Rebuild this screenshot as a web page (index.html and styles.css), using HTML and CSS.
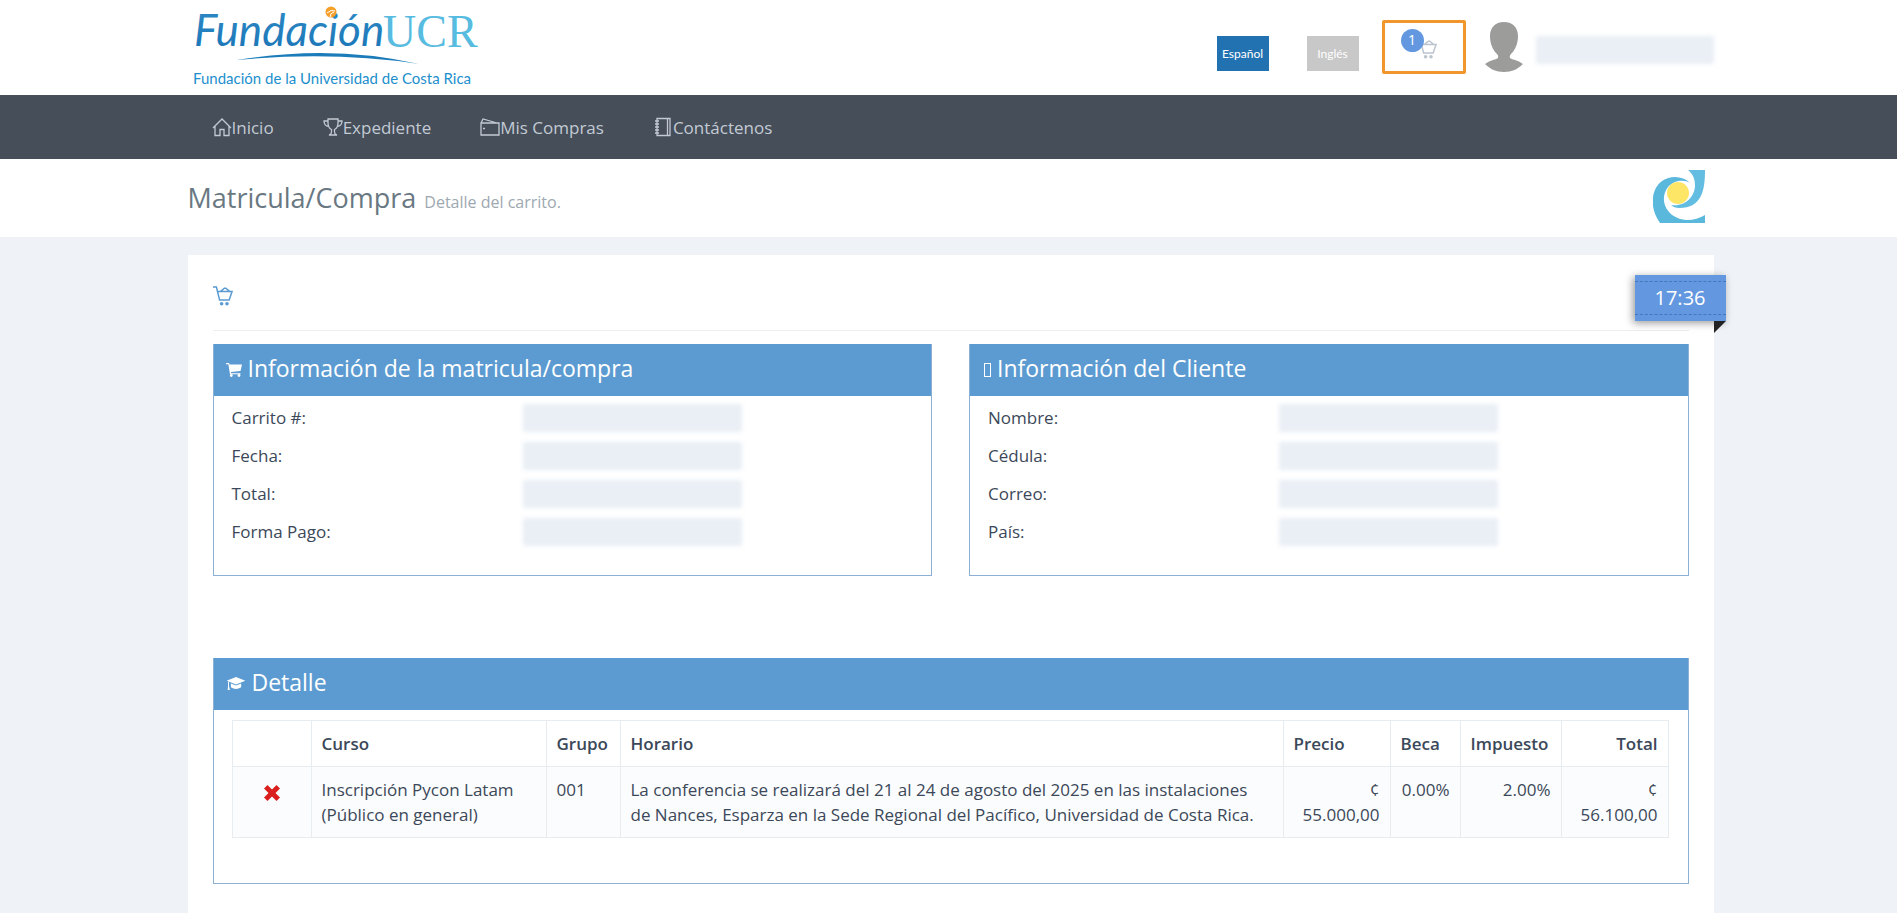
FILE: index.html
```html
<!DOCTYPE html>
<html lang="es">
<head>
  <meta charset="UTF-8" />
  <meta name="viewport" content="width=device-width, initial-scale=1.0"/>
  <title>Matricula/Compra</title>
  <link rel="stylesheet" href="styles.css">
</head>
<body>

  <svg class="sprite" aria-hidden="true">
    <symbol id="icon-cart" viewBox="0 0 20 20">
      <path d="M0 1h3.4l3.2 13h9.6L19 5.6H4.6M7.6 5.4l3.8-3.2h1.4l3.8 3.2" fill="none" stroke="currentColor" stroke-width="1.5"/>
      <circle cx="8.6" cy="17.8" r="1.8" fill="currentColor"/>
      <circle cx="14" cy="17.8" r="1.8" fill="currentColor"/>
    </symbol>
  </svg>

  <header class="top">
    <div class="container top-inner">
      <a class="logo" href="#" aria-label="Fundación UCR">
        <svg viewBox="0 0 295 90" width="295" height="90">
          <defs>
            <linearGradient id="blue" x1="0" y1="0" x2="0" y2="1">
              <stop offset="0" stop-color="#2f8cc6"/>
              <stop offset="1" stop-color="#1a74b6"/>
            </linearGradient>
          </defs>
          <text class="logo-name" x="6" y="46" fill="url(#blue)">Fundación</text>
          <text class="logo-ucr" x="195" y="47">UCR</text>
          <circle cx="143" cy="12" r="5.5" fill="#f6a02b"/>
          <path d="M139 13q4-4 8-2M142 17q0-4 4-5" fill="none" stroke="#fff" stroke-width="1"/>
          <path d="M49 60Q145 44 231 64Q145 51 49 60z" fill="#1c7cba"/>
          <text class="logo-sub" x="5" y="84">Fundación de la Universidad de Costa Rica</text>
        </svg>
      </a>
      <div class="tools">
        <div class="langs">
          <button class="lang active">Español</button>
          <button class="lang">Inglés</button>
        </div>
        <a class="cart" href="#" aria-label="Carrito">
          <svg class="cart-icon"><use href="#icon-cart"/></svg>
          <span class="badge">1</span>
        </a>
        <svg class="avatar" viewBox="0 0 38 50">
          <path d="M19 0c9 0 14 6 14 14 0 8-3 14-7 18-3 4 0 5 4 6q4 1 8 4c-5 5-11 8-19 8S5 47 0 42q4-3 8-4c4-1 7-2 4-6-4-4-7-10-7-18C5 6 10 0 19 0z" fill="#9c9d9b"/>
        </svg>
        <span class="redacted user"></span>
      </div>
    </div>
  </header>

  <nav class="menu">
    <div class="container menu-inner">
      <a href="#">
        <svg class="menu-icon" viewBox="0 0 20 20"><path d="M1 11L10 2l9 9M3 9.500v9h5v-6h4v6h5v-9"/></svg>Inicio
      </a>
      <a href="#">
        <svg class="menu-icon" viewBox="0 0 20 20"><path d="M5 2h10v4q0 5-3.500 6.500V15q0 2 2.500 3H6q2.500-1 2.500-3v-2.500Q5 11 5 6zM5 4H1q0 5 5 5.500M15 4h4q0 5-5 5.500"/></svg>Expediente
      </a>
      <a href="#">
        <svg class="menu-icon" viewBox="0 0 20 20"><path d="M1 6h18v12H1zM1 6l2-4 14 4"/><path d="M3 11.500h2"/></svg>Mis Compras
      </a>
      <a href="#">
        <svg class="menu-icon" viewBox="0 0 20 20"><path d="M4 1.500h13v17H4zM14.500 1.500v17M2 4h4M2 7h4M2 10h4M2 13h4M2 16h4"/></svg>Contáctenos
      </a>
    </div>
  </nav>

  <div class="page-head">
    <div class="container page-head-inner">
      <h1>Matricula/Compra<small>Detalle del carrito.</small></h1>
      <svg class="swirl" viewBox="0 0 52 53">
        <path d="M35 0h17c0 20-3 38-26 38q-5 0-8-3c14 2 24-8 24-20 0-7-3-12-7-15z" fill="#62bde0"/>
        <path d="M37 13C31 9 21 10 15 17C5 30 14 49 34 50q10 0 18-5v8H7C-4 38-2 19 9 11c9-6 21-5 28 2z" fill="#5ab8dd"/>
        <circle cx="25" cy="23" r="11" fill="#fde566"/>
      </svg>
    </div>
  </div>

  <div class="page-body">
    <main class="container content">
      <div class="ribbon">17:36</div>
      <div class="content-title">
        <svg class="cart-icon"><use href="#icon-cart"/></svg>
      </div>

      <div class="row">
        <section class="panel">
          <h2>
            <svg class="panel-icon" viewBox="0 0 16 14"><path d="M0 0h3l.5 1.500H16L14.500 8 5 9v1.200h9.500v1H4L2.400 1.200H0z"/><circle cx="5.300" cy="12.500" r="1.400"/><circle cx="13" cy="12.500" r="1.400"/></svg>
            Información de la matricula/compra
          </h2>
          <dl>
            <dt>Carrito #:</dt><dd class="redacted"></dd>
            <dt>Fecha:</dt><dd class="redacted"></dd>
            <dt>Total:</dt><dd class="redacted"></dd>
            <dt>Forma Pago:</dt><dd class="redacted"></dd>
          </dl>
        </section>
        <section class="panel">
          <h2><span class="missing-icon"></span> Información del Cliente</h2>
          <dl>
            <dt>Nombre:</dt><dd class="redacted"></dd>
            <dt>Cédula:</dt><dd class="redacted"></dd>
            <dt>Correo:</dt><dd class="redacted"></dd>
            <dt>País:</dt><dd class="redacted"></dd>
          </dl>
        </section>
      </div>

      <section class="panel detail">
        <h2>
          <svg class="panel-icon wide" viewBox="0 0 20 15"><path d="M10 0l10 4-10 4L0 4z"/><path d="M4.500 7l5.500 2.200L15.500 7v4q-5.500 3.500-11 0z"/><path d="M1.500 5h1v5l1 4H1l.5-4z"/></svg>
          Detalle
        </h2>
        <table>
          <thead>
            <tr>
              <th class="col-remove"></th>
              <th class="col-course">Curso</th>
              <th class="col-group">Grupo</th>
              <th>Horario</th>
              <th class="col-amount">Precio</th>
              <th class="col-grant">Beca</th>
              <th class="col-tax">Impuesto</th>
              <th class="col-amount num">Total</th>
            </tr>
          </thead>
          <tbody>
            <tr>
              <td>
                <button class="remove" aria-label="Eliminar">
                  <svg viewBox="0 0 16 16" width="16" height="16"><path d="M3.500 0L8 4.500 12.500 0 16 3.500 11.500 8l4.500 4.500-3.500 3.500L8 11.500 3.500 16 0 12.500 4.500 8 0 3.500z"/></svg>
                </button>
              </td>
              <td>Inscripción Pycon Latam (Público en general)</td>
              <td>001</td>
              <td>La conferencia se realizará del 21 al 24 de agosto del 2025 en las instalaciones de&nbsp;Nances, Esparza en la Sede Regional del Pacífico, Universidad de Costa Rica.</td>
              <td class="num">¢ 55.000,00</td>
              <td class="num">0.00%</td>
              <td class="num">2.00%</td>
              <td class="num">¢ 56.100,00</td>
            </tr>
          </tbody>
        </table>
      </section>
    </main>
  </div>

</body>
</html>
```
FILE: styles.css
```css
* {
  margin: 0;
  padding: 0;
  box-sizing: border-box;
}

body {
  background: #eff3f8;
  min-height: 100vh;
  display: flex;
  flex-direction: column;
  font-family: "Open Sans", sans-serif;
  font-size: 17px;
  line-height: 25px;
  color: #3b4859;
}

a {
  color: inherit;
  text-decoration: none;
}

button {
  border: none;
  cursor: pointer;
}

.sprite {
  position: absolute;
  width: 0;
  height: 0;
}

.container {
  width: 100%;
  max-width: 1526px;
  margin: 0 auto;
}

/* header */
.top,
.page-head {
  background: #fff;
}

.top,
.menu,
.page-head,
.page-body {
  padding-left: 4px;
}

.top-inner {
  display: flex;
  justify-content: space-between;
  height: 95px;
}

.logo {
  display: block;
}

.logo-name {
  font: italic 44px Lato, sans-serif;
}

.logo-ucr {
  font: 46px "Liberation Serif", serif;
  fill: #58bbe0;
}

.logo-sub {
  font: 15px Lato, sans-serif;
  fill: #1c8fcd;
}

.tools {
  display: flex;
  align-items: center;
  padding-bottom: 2px;
}

.langs {
  display: flex;
  gap: 38px;
  padding-top: 13px;
}

.lang {
  width: 52px;
  height: 35px;
  background: #c8c8c8;
  color: #fff;
  font: 12px Lato, sans-serif;
}

.lang.active {
  background: #2272b2;
}

.cart {
  position: relative;
  width: 84px;
  height: 54px;
  margin: 0 19px 0 23px;
  padding: 16px 0 0 32px;
  border: 3px solid #f0962b;
  border-radius: 2px;
  color: #bcc5ce;
}

.cart-icon {
  display: block;
  width: 20px;
  height: 20px;
}

.badge {
  position: absolute;
  left: 16px;
  top: 6px;
  width: 23px;
  height: 23px;
  border-radius: 50%;
  background: #6398e0;
  color: #fff;
  font-size: 14px;
  line-height: 22px;
  text-align: center;
}

.avatar {
  width: 38px;
  height: 50px;
}

.redacted {
  background: #e9eff5;
  filter: blur(2px);
}

.user {
  width: 178px;
  height: 28px;
  margin: 6px 0 0 13px;
}

/* menu */
.menu {
  background: #454e59;
  color: #c3cad4;
}

.menu-inner {
  display: flex;
  gap: 49px;
  height: 64px;
  padding-left: 24px;
}

.menu a {
  display: flex;
  align-items: center;
}

.menu-icon {
  width: 20px;
  height: 20px;
  fill: none;
  stroke: currentColor;
  stroke-width: 1.3;
}

/* page title */
.page-head-inner {
  display: flex;
  align-items: center;
  justify-content: space-between;
  height: 78px;
  padding: 0 9px 3px 0;
}

h1 {
  display: flex;
  align-items: baseline;
  gap: 8px;
  padding-top: 6px;
  font-size: 27px;
  font-weight: 400;
  color: #697882;
}

h1 small {
  font-size: 16px;
  color: #9da8b1;
}

.swirl {
  width: 52px;
  height: 53px;
}

/* content */
.page-body {
  flex: 1;
  display: flex;
  padding-top: 18px;
}

.content {
  position: relative;
  padding: 0 25px 30px;
  background: #fff;
}

.content-title {
  height: 76px;
  margin-bottom: 13px;
  padding-top: 31px;
  border-bottom: 1px solid #eee;
  color: #5b9bd1;
}

.ribbon {
  position: absolute;
  right: -12px;
  top: 20px;
  width: 91px;
  padding: 10px 0;
  background: #6398e0;
  box-shadow: -2px 2px 8px rgba(0, 0, 0, 0.4);
  color: #fff;
  font-size: 20px;
  line-height: 26px;
  text-align: center;
}

.ribbon::before {
  content: "";
  position: absolute;
  inset: 6px 0;
  border: dashed #4577ba;
  border-width: 1px 0;
}

/* folded corner */
.ribbon::after {
  content: "";
  position: absolute;
  right: 0;
  top: 100%;
  border-top: 12px solid #222;
  border-right: 12px solid transparent;
}

.row {
  display: flex;
  gap: 37px;
  margin-bottom: 82px;
}

.panel {
  flex: 1;
  border: 1px solid #8bb0d3;
  border-top: none;
}

h2 {
  height: 52px;
  padding: 0 12px;
  background: #5b9bd1;
  color: #fff;
  font-size: 23px;
  font-weight: 400;
  line-height: 48px;
}

.panel-icon {
  width: 16px;
  height: 14px;
  fill: currentColor;
}

.panel-icon.wide {
  width: 20px;
}

.missing-icon {
  display: inline-block;
  width: 7px;
  height: 14px;
  margin-left: 2px;
  border: 1px solid #fff;
}

dl {
  display: grid;
  grid-template-columns: 291px 219px;
  gap: 10px 0;
  padding: 8px 18px 29px;
}

dt {
  line-height: 28px;
}

.detail {
  display: flow-root;
}

.detail table {
  width: calc(100% - 37px);
  margin: 10px 18px 45px;
  border-collapse: collapse;
  table-layout: fixed;
}

th,
td {
  padding: 10px;
  border: 1px solid #e7ecf1;
  text-align: left;
  vertical-align: top;
}

th {
  font-weight: 600;
}

tbody tr {
  background: #fbfcfd;
}

.num {
  text-align: right;
}

.col-remove {
  width: 79px;
}

.col-course {
  width: 235px;
}

.col-group {
  width: 74px;
}

.col-amount {
  width: 107px;
}

.col-grant {
  width: 70px;
}

.col-tax {
  width: 101px;
}

.remove {
  display: flex;
  margin: 8px auto 0;
  background: none;
  fill: #d9201f;
}
```
